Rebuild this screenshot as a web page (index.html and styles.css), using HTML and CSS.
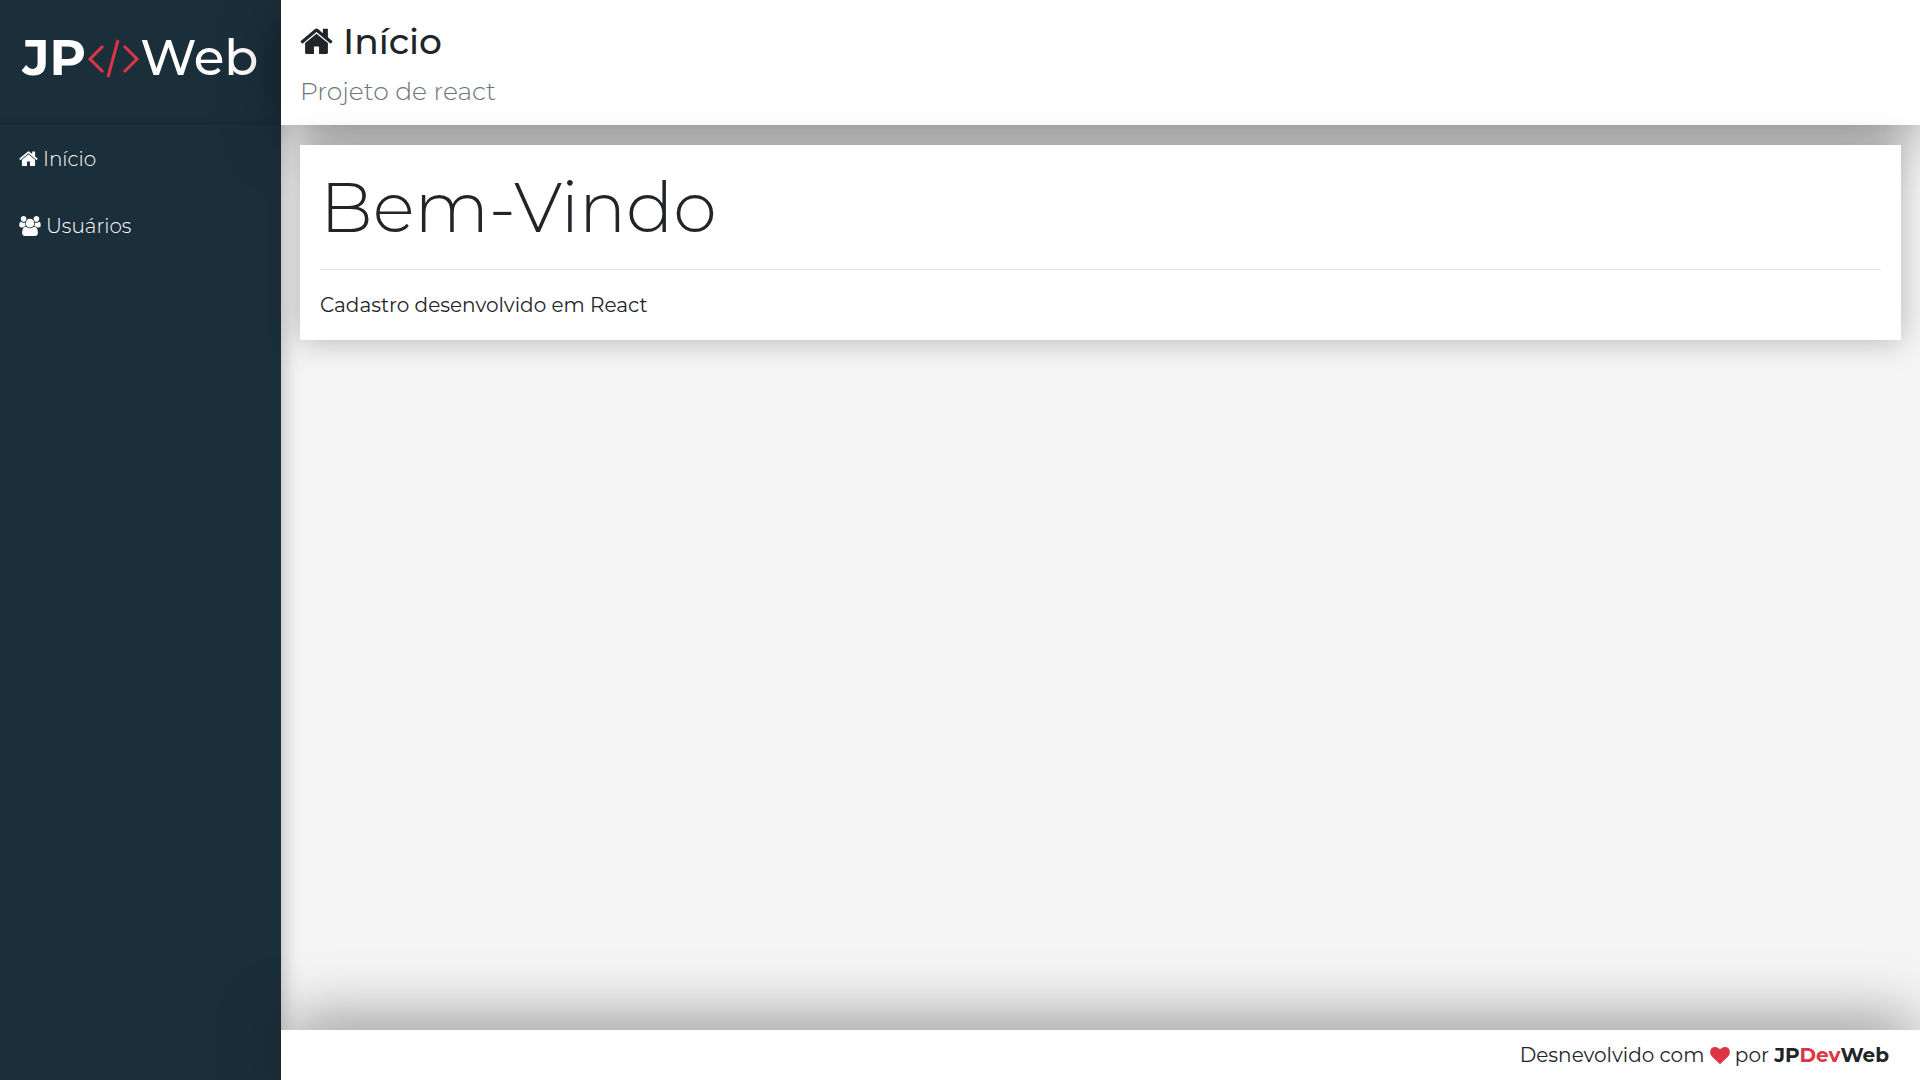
FILE: index.html
```html
<!DOCTYPE html>
<html lang="pt-BR">
<head>
<meta charset="utf-8">
<meta name="viewport" content="width=device-width, initial-scale=1">
<title>JPWeb - Início</title>
<link rel="stylesheet" href="styles.css">
</head>
<body>
<svg class="sprite" aria-hidden="true">
  <symbol id="home" viewBox="0 0 1664 1312">
    <path d="M1408 768v480q0 26-19 45t-45 19H960V928H704v384H320q-26 0-45-19t-19-45V768q0-1 .5-3t.5-3l575-474 575 474q1 2 1 6zm223-69l-62 74q-8 9-21 11h-3q-13 0-21-7L832 200 140 777q-12 8-24 7-13-2-21-11l-62-74q-8-10-7-23.500t11-21.500l719-599q32-26 76-26t76 26l244 204V64q0-14 9-23t23-9h192q14 0 23 9t9 23v408l219 182q10 8 11 21.500t-7 23.500z"/>
  </symbol>
  <symbol id="users" viewBox="0 0 1920 1792">
    <path d="M593 896q-162 5-265 128H194q-82 0-138-40.500T0 865q0-353 124-353 6 0 43.500 21t97.500 42.500T384 597q67 0 133-23-5 37-5 66 0 139 81 256zm1071 637q0 120-73 189.500t-194 69.500H523q-121 0-194-69.500T256 1533q0-53 3.500-103.500t14-109T300 1212t43-97.500 62-81 85.500-53.500T602 960q10 0 43 21.500t73 48 107 48 135 21.500 135-21.500 107-48 73-48 43-21.500q61 0 111.500 20t85.500 53.500 62 81 43 97.500 26.500 108.500 14 109 3.500 103.500zM640 256q0 106-75 181t-181 75-181-75-75-181 75-181T384 0t181 75 75 181zm704 384q0 159-112.500 271.500T960 1024 688.500 911.500 576 640t112.500-271.500T960 256t271.500 112.500T1344 640zm576 225q0 78-56 118.500t-138 40.500h-134q-103-123-265-128 81-117 81-256 0-29-5-66 66 23 133 23 59 0 119-21.500t97.500-42.500 43.500-21q124 0 124 353zm-128-609q0 106-75 181t-181 75-181-75-75-181 75-181 181-75 181 75 75 181z"/>
  </symbol>
  <symbol id="heart" viewBox="0 0 1792 1536">
    <path d="M896 1536q-26 0-44-18L228 916q-10-8-27.500-26T145 824.500 77 727 23.500 606 0 468q0-220 127-344T478 0q62 0 126.500 21.500t120 58T820 148t76 68q36-36 76-68t95.500-68.500 120-58T1314 0q224 0 351 124t127 344q0 221-229 450l-623 600q-18 18-44 18z"/>
  </symbol>
</svg>
<div class="app">
  <aside class="side">
    <a class="logo" href="#" aria-label="JPWeb">
      <strong>JP</strong>
      <svg class="logo-code" viewBox="0 0 54 40" aria-hidden="true">
        <path d="M17 8 4 21l13 13M38 8l13 13L38 34M32 2 22 39"/>
      </svg>
      <span>Web</span>
    </a>
    <nav class="menu">
      <a href="#"><svg class="icon-home"><use href="#home"/></svg>Início</a>
      <a href="#"><svg class="icon-users"><use href="#users"/></svg>Usuários</a>
    </nav>
  </aside>
  <header class="header">
    <h1><svg class="icon-title"><use href="#home"/></svg>Início</h1>
    <p>Projeto de react</p>
  </header>
  <main class="content">
    <section class="card">
      <h2>Bem-Vindo</h2>
      <hr>
      <p>Cadastro desenvolvido em React</p>
    </section>
  </main>
  <footer class="footer">
    <span>Desnevolvido com <svg class="icon-heart"><use href="#heart"/></svg> por <strong>JP<em>Dev</em>Web</strong></span>
  </footer>
</div>
</body>
</html>
```
FILE: styles.css
```css
* { box-sizing: border-box; }

body {
  margin: 0;
  font-family: Montserrat, Inter, sans-serif;
  font-size: 20px;
  font-weight: 400;
  line-height: 30px;
  color: #212529;
}

h1, h2, p { margin: 0; }
a { color: inherit; text-decoration: none; }
svg { fill: currentColor; }
.sprite { position: absolute; width: 0; height: 0; }

.app {
  display: grid;
  grid-template-columns: 281px 1fr;
  grid-template-rows: 125px 1fr 50px;
  min-height: 100vh;
  overflow: hidden;
  background: #f5f5f5;
}

.side {
  grid-row: 1 / 4;
  display: grid;
  grid-template-rows: 125px 1fr;
  background: #1b2f3a;
  color: #fff;
  box-shadow: 0 0 20px rgba(0, 0, 0, .3);
}

.logo {
  display: flex;
  align-items: center;
  justify-content: center;
  padding-bottom: 10px;
  font-size: 50px;
  font-weight: 500;
  line-height: 60px;
  box-shadow: inset 0 -10px 10px -10px rgba(0, 0, 0, .2);
}

.logo strong { font-weight: 700; }

.logo-code {
  width: 54px;
  height: 40px;
  fill: none;
  stroke: #dc3545;
  stroke-width: 3;
}

.menu a {
  display: flex;
  align-items: center;
  gap: 5px;
  height: 67px;
  padding: 0 19px;
  font-weight: 300;
}

.icon-home { width: 19px; height: 15px; }
.icon-users { width: 22px; height: 20px; }
.icon-title { width: 33px; height: 26px; margin-right: 10px; }
.icon-heart { width: 20px; height: 17px; color: #dc3545; vertical-align: -2px; }

.header,
.footer {
  position: relative;
  background: #fff;
}

.header {
  padding: 19px;
  box-shadow: 0 10px 60px -5px rgba(0, 0, 0, .56);
}

.header h1 {
  font-size: 36px;
  font-weight: 500;
  line-height: 44px;
}

.header p {
  padding-top: 13px;
  font-size: 25px;
  font-weight: 300;
  color: #6c757d;
}

.content {
  position: relative;
  padding: 20px 19px;
}

.card {
  padding: 20px;
  background: #fff;
  box-shadow: 0 0 30px rgba(0, 0, 0, .28);
}

.card h2 {
  font-size: 70px;
  font-weight: 300;
  line-height: 84px;
}

.card hr {
  margin: 20px 0;
  border: 0;
  border-top: 1px solid #e5e5e5;
}

.footer {
  display: flex;
  align-items: center;
  justify-content: flex-end;
  padding: 0 31px;
  box-shadow: 0 -8px 64px -5px rgba(0, 0, 0, .56);
}

.footer strong { font-weight: 700; }

.footer em {
  font-style: normal;
  color: #dc3545;
}
```
